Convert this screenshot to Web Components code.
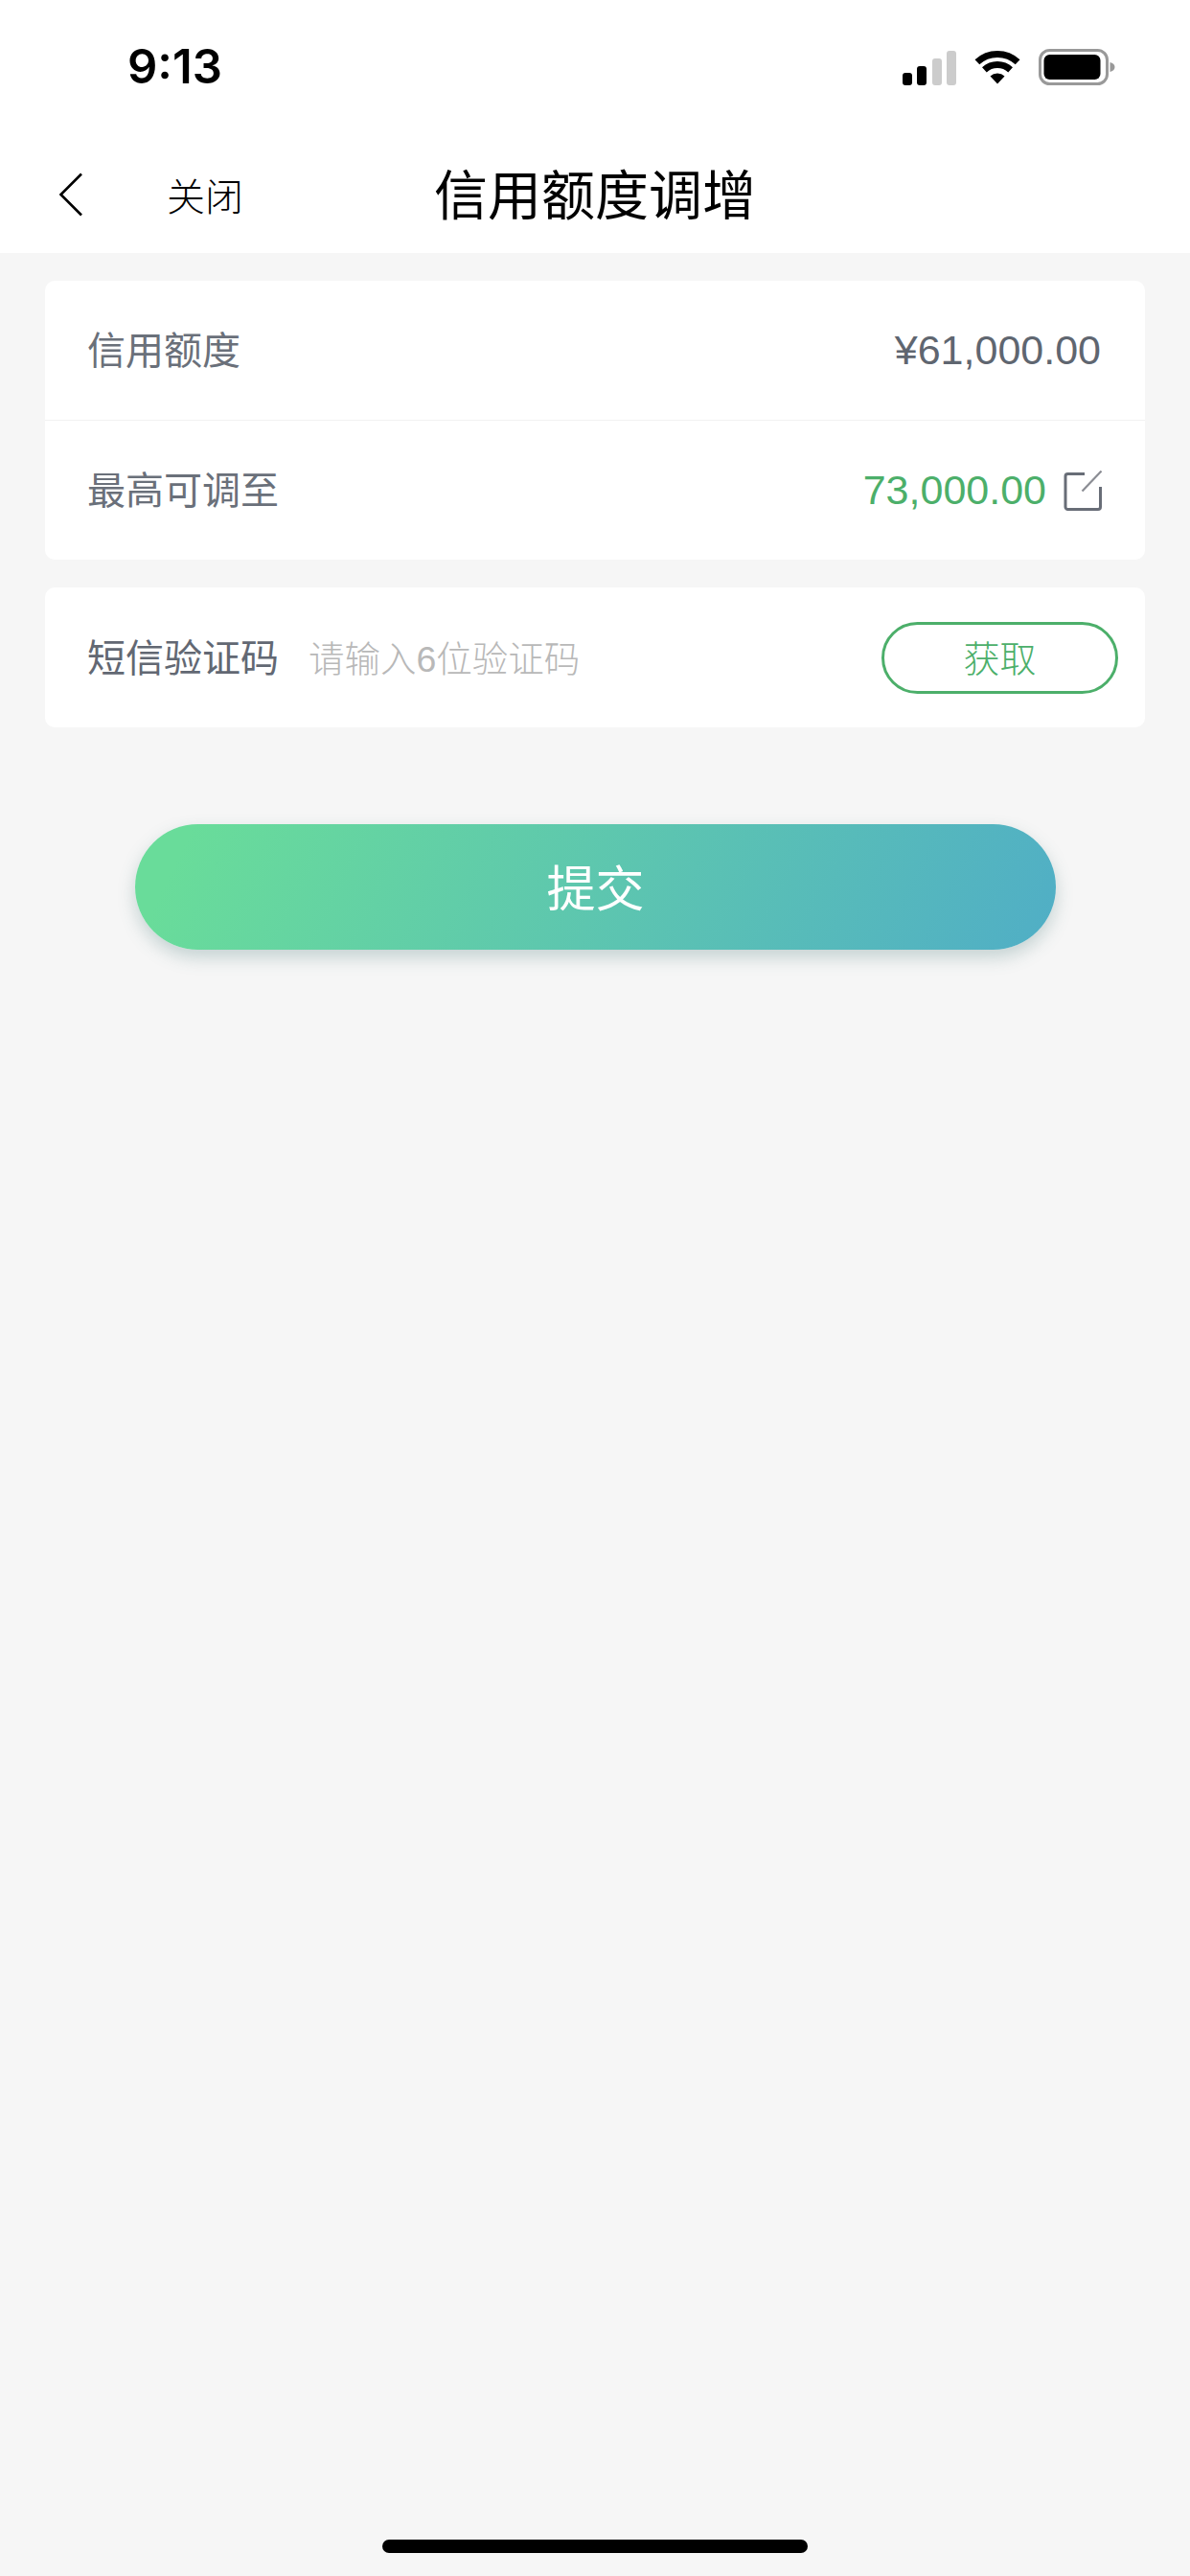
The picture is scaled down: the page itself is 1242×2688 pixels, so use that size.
<!DOCTYPE html>
<html lang="zh">
<head>
<meta charset="utf-8">
<title>信用额度调增</title>
<style>
  html, body { margin: 0; height: 100%; }
  body {
    width: 1242px; height: 2688px;
    display: flex; flex-direction: column;
    background: #f6f6f6;
    font-family: "Liberation Sans", "Noto Sans CJK SC", sans-serif;
    color: #5f6670;
  }
  .green { color: #4caf6a; }
</style>
</head>
<body>
  <status-bar time="9:13"></status-bar>
  <nav-bar close="关闭">信用额度调增</nav-bar>

  <info-card style="margin-top:29px">
    <info-row>
      <span slot="label">信用额度</span>
      <span>¥61,000.00</span>
    </info-row>
    <info-row divider>
      <span slot="label">最高可调至</span>
      <span class="green">73,000.00</span>
      <edit-icon></edit-icon>
    </info-row>
  </info-card>

  <info-card style="margin-top:29px">
    <sms-row placeholder="请输入6位验证码" action="获取">短信验证码</sms-row>
  </info-card>

  <submit-button>提交</submit-button>
  <home-bar></home-bar>

<script>
class StatusBar extends HTMLElement {
  connectedCallback() {
    this.attachShadow({ mode: 'open' });
    this.shadowRoot.innerHTML = `
      <style>
        :host { display: flex; justify-content: space-between; height: 142px; background: #fff; padding: 51px 78px 0 133px; box-sizing: border-box; }
        .time { font: 600 49px/38px Inter, sans-serif; color: #000; }
        .icons { display: flex; gap: 19px; height: 38px; }
        .signal { display: flex; align-items: flex-end; gap: 5.5px; height: 37px; margin-top: 1px; }
        .signal i { display: block; width: 10px; border-radius: 3px; background: #000; }
        .signal i.off { background: #ccc; }
        svg { display: block; }
      </style>
      <div class="time">${this.getAttribute('time')}</div>
      <div class="icons">
        <div class="signal">
          <i style="height:13px"></i><i style="height:20px"></i>
          <i class="off" style="height:28px"></i><i class="off" style="height:36px"></i>
        </div>
        <svg width="48" height="36" viewBox="0 0 48 36" style="margin-top:1px">
          <path d="M2.9 12.8A31 31 0 0 1 45.1 12.8M10.4 20.9A20 20 0 0 1 37.6 20.9" fill="none" stroke="#000" stroke-width="7"/>
          <path d="M24 35.5L16.5 27.5A11 11 0 0 1 31.5 27.5Z" fill="#000"/>
        </svg>
        <svg width="80" height="38" viewBox="0 0 80 38">
          <rect x="1.5" y="1.5" width="70" height="35" rx="10" fill="none" stroke="#999" stroke-width="3"/>
          <rect x="5.5" y="6" width="59" height="26" rx="6" fill="#000"/>
          <path d="M74.5 14c3 .6 5 2.500 5 5s-2 4.400-5 5z" fill="#999"/>
        </svg>
      </div>
    `;
  }
}
customElements.define('status-bar', StatusBar);

class NavBar extends HTMLElement {
  connectedCallback() {
    this.attachShadow({ mode: 'open' });
    this.shadowRoot.innerHTML = `
      <style>
        :host { display: grid; grid-template-columns: 1fr auto 1fr; align-items: center; height: 122px; background: #fff; color: #000; }
        .left { display: flex; align-items: center; padding-left: 61px; gap: 87px; font-size: 40px; font-weight: 300; }
        .title { font-size: 56px; font-weight: 400; line-height: 1; padding-top: 3px; }
        svg { display: block; }
      </style>
      <div class="left">
        <svg width="26" height="46" viewBox="0 0 26 46"><path d="M24 1.5L2.500 23L24 44.500" fill="none" stroke="#000" stroke-width="2.600"/></svg>
        <span>${this.getAttribute('close')}</span>
      </div>
      <div class="title"><slot></slot></div>
      <div></div>
    `;
  }
}
customElements.define('nav-bar', NavBar);

class InfoCard extends HTMLElement {
  connectedCallback() {
    this.attachShadow({ mode: 'open' });
    this.shadowRoot.innerHTML = `
      <style>
        :host { display: block; margin: 0 47px; background: #fff; border-radius: 10px; overflow: hidden; }
      </style>
      <slot></slot>
    `;
  }
}
customElements.define('info-card', InfoCard);

class InfoRow extends HTMLElement {
  connectedCallback() {
    this.attachShadow({ mode: 'open' });
    this.shadowRoot.innerHTML = `
      <style>
        :host { display: flex; align-items: center; justify-content: space-between; box-sizing: border-box; height: 145px; padding: 0 46px 0 44px; }
        :host([divider]) { height: 146px; border-top: 1px solid #f1f1f1; }
        .label { font-size: 40px; font-weight: 400; color: #6a707a; padding-bottom: 5px; }
        .value { display: flex; align-items: center; gap: 18px; font-size: 43px; }
      </style>
      <div class="label"><slot name="label"></slot></div>
      <div class="value"><slot></slot></div>
    `;
  }
}
customElements.define('info-row', InfoRow);

class EditIcon extends HTMLElement {
  connectedCallback() {
    this.attachShadow({ mode: 'open' });
    this.shadowRoot.innerHTML = `
      <style>
        :host { display: block; width: 40px; height: 42px; margin-right: -1px; }
        svg { display: block; }
      </style>
      <svg width="40" height="42" viewBox="0 0 40 42">
        <path d="M22 3.500H4.500a2.500 2.500 0 0 0-2.500 2.500V38a2.500 2.500 0 0 0 2.500 2.500H36a2.500 2.500 0 0 0 2.500-2.500V17" fill="none" stroke="#686d77" stroke-width="3"/>
        <path d="M19.500 21.500L39.500 0.500" fill="none" stroke="#8b8d94" stroke-width="2.200"/>
      </svg>
    `;
  }
}
customElements.define('edit-icon', EditIcon);

class SmsRow extends HTMLElement {
  connectedCallback() {
    this.attachShadow({ mode: 'open' });
    this.shadowRoot.innerHTML = `
      <style>
        :host { display: flex; align-items: center; box-sizing: border-box; height: 146px; padding: 0 28px 0 44px; }
        .label { font-size: 40px; font-weight: 400; color: #626873; padding-bottom: 5px; }
        .hint { flex: 1; margin-left: 31px; font-size: 37.5px; font-weight: 300; color: #b8b8b8; padding-bottom: 3px; }
        .btn { display: flex; align-items: center; justify-content: center; box-sizing: border-box; width: 247px; height: 75px; border: 3px solid #4caf6a; border-radius: 38px; color: #4caf6a; font-size: 38px; font-weight: 300; padding-bottom: 3px; }
      </style>
      <div class="label"><slot></slot></div>
      <div class="hint">${this.getAttribute('placeholder')}</div>
      <div class="btn">${this.getAttribute('action')}</div>
    `;
  }
}
customElements.define('sms-row', SmsRow);

class SubmitButton extends HTMLElement {
  connectedCallback() {
    this.attachShadow({ mode: 'open' });
    this.shadowRoot.innerHTML = `
      <style>
        :host { display: flex; align-items: center; justify-content: center; box-sizing: border-box; height: 131px; margin: 101px 140px 0 141px; padding-bottom: 4px; border-radius: 66px; background: linear-gradient(116deg, #69dc9a 6%, #50aec6 100%); box-shadow: 0 8px 18px rgba(70, 120, 120, .28); color: #fff; font-size: 51px; font-weight: 400; }
      </style>
      <slot></slot>
    `;
  }
}
customElements.define('submit-button', SubmitButton);

class HomeBar extends HTMLElement {
  connectedCallback() {
    this.attachShadow({ mode: 'open' });
    this.shadowRoot.innerHTML = `
      <style>
        :host { display: flex; justify-content: center; margin-top: auto; padding-bottom: 24px; }
        div { width: 444px; height: 14px; border-radius: 7px; background: #000; }
      </style>
      <div></div>
    `;
  }
}
customElements.define('home-bar', HomeBar);
</script>
</body>
</html>
